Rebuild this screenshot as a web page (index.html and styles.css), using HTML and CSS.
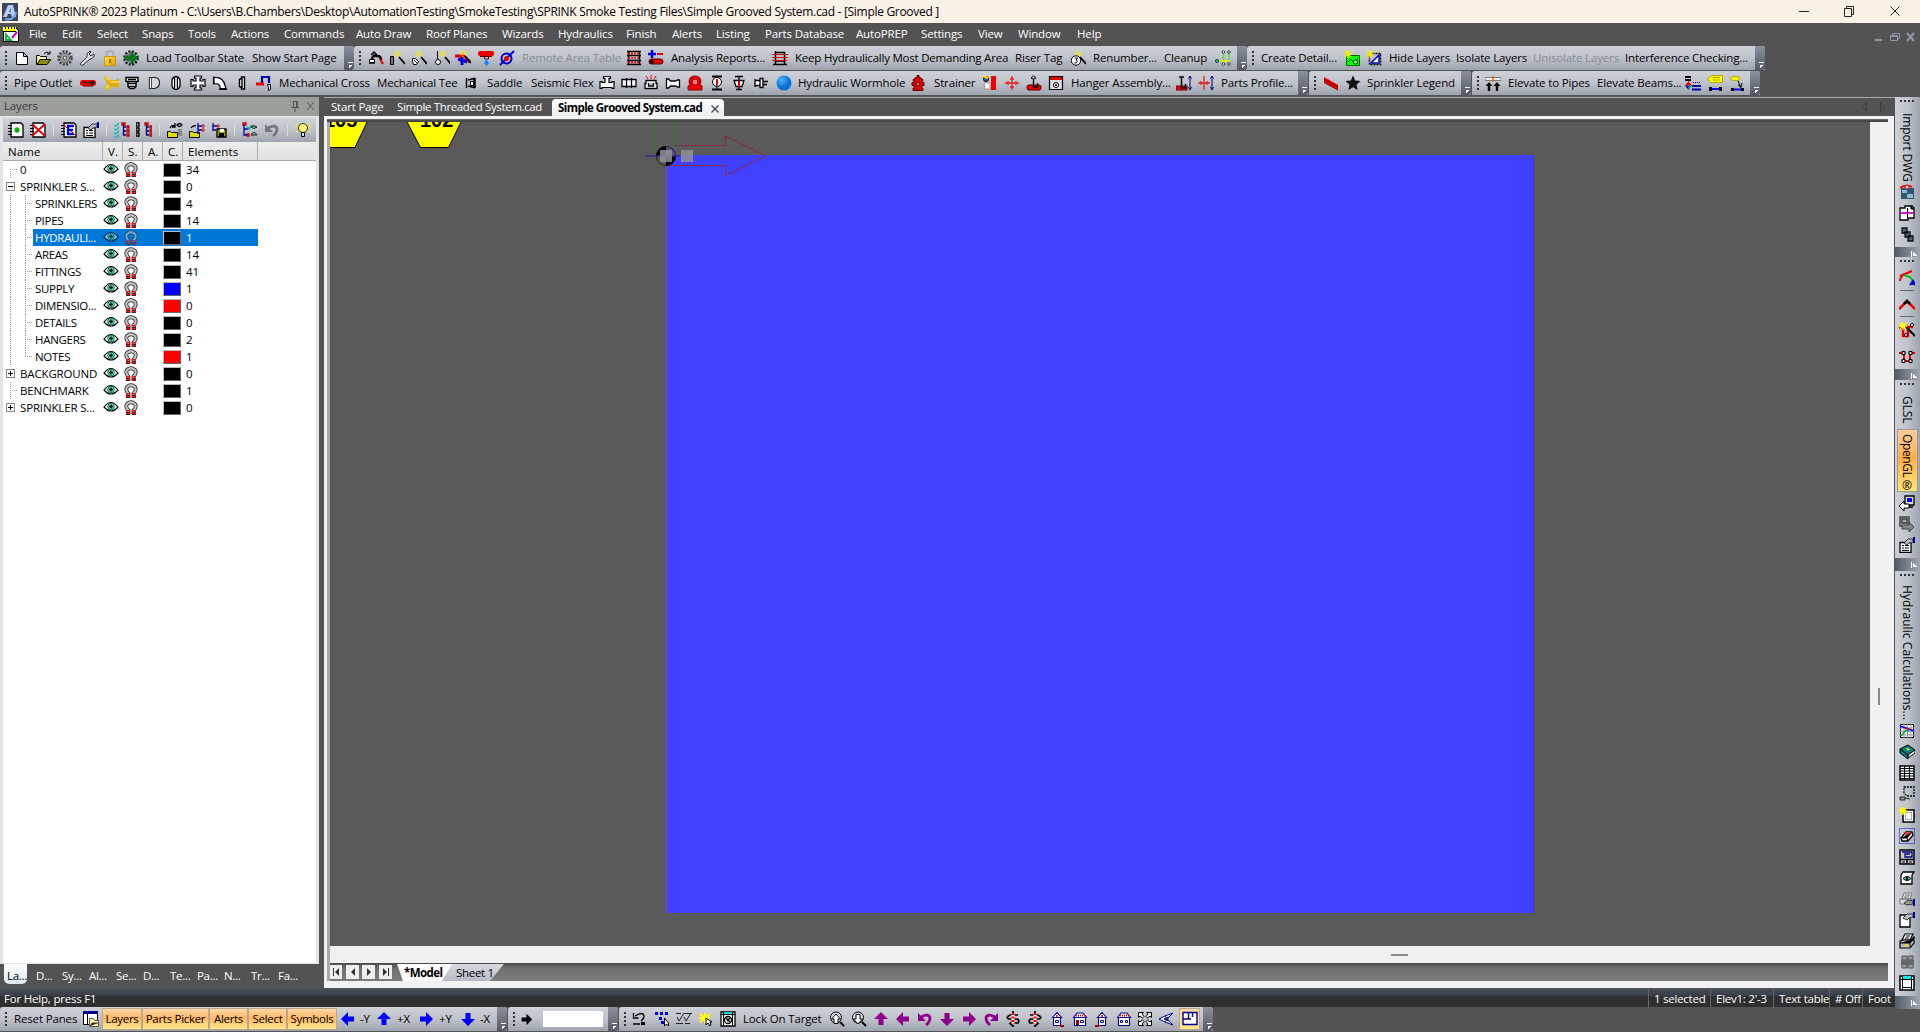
FILE: index.html
```html
<!DOCTYPE html>
<html lang="en">
<head>
<meta charset="utf-8">
<title>AutoSPRINK 2023 Platinum</title>
<link rel="stylesheet" href="styles.css">
</head>
<body>
<svg class="defs" aria-hidden="true">
<defs>
<linearGradient id="gold" x1="0" y1="0" x2="1" y2="1"><stop offset="0" stop-color="#ffe25a"/><stop offset="1" stop-color="#e09a00"/></linearGradient>
<radialGradient id="ball" cx=".35" cy=".3"><stop offset="0" stop-color="#4db4ff"/><stop offset="1" stop-color="#0a6fd6"/></radialGradient>
</defs>
<symbol id="i-app" viewBox="0 0 16 18"><path fill="#3a4560" d="M0 0h16v18H0z"/><path fill="#b8cbed" d="M1 14 6 2h5l3 12h-4l-1-3H6l-1 3z"/><path fill="#3566bb" d="M7 9h2V5z"/><path d="M3 16q9 2 11-7" fill="none" stroke="#79a5ed" stroke-width="2"/></symbol>
<symbol id="i-cad" viewBox="0 0 16 16"><path fill="#fff" stroke="#000" d="M.5 1.500h12l3 3v11H.5z"/><path fill="#ff0" d="M0 1h13v4H0z"/><path stroke="#000" d="M2.500 1v2M5.500 1v2M8.500 1v2M11.500 1v2M0 5.500h13"/><path fill="#0b3" d="m2 6 8 9H2z"/><path fill="#fff" d="m4 11 2 2H4z"/><path stroke="#c0c" stroke-width="2" d="m9 12 5-6"/></symbol>
<symbol id="i-doc" viewBox="0 0 16 16"><path fill="#fff" stroke="#000" d="M2.500 2.500h7l4 4v8h-11zM9.500 2.500v4h4"/></symbol>
<symbol id="i-open" viewBox="0 0 16 16"><path fill="#ffff90" stroke="#000" d="M1.500 14.500v-9h3l1 1h6v3"/><path fill="#908b00" stroke="#000" d="m2 14.500 3-5h11l-4 5z"/><path fill="none" stroke="#000" d="M9 3.500q3-3 5.500 0M15 1v3h-3"/></symbol>
<symbol id="i-gear" viewBox="0 0 16 16"><circle cx="8" cy="8" r="6.500" fill="none" stroke="#444" stroke-width="2.600" stroke-dasharray="2.100 1.300"/><circle cx="8" cy="8" r="4.500" fill="#aaa" stroke="#555"/><circle cx="8" cy="8" r="2" fill="#d5d5d5" stroke="#444"/></symbol>
<symbol id="i-wrench" viewBox="0 0 16 16"><path fill="#ddd" stroke="#333" d="m1 14 7-7q-1-4 3-6l1 1-2 2 2 2 3-2q1 4-4 5l-7 6q-2 1-3-1z"/></symbol>
<symbol id="i-lock" viewBox="0 0 16 16"><path fill="none" stroke="#aaa" stroke-width="2" d="M4.500 8V4q0-3 3.500-3t3.500 3v4"/><path fill="url(#gold)" stroke="#c90" d="M2.500 6.500h11v9h-11z"/><path stroke="#b36b00" stroke-width="2" d="M8 9v4"/></symbol>
<symbol id="i-ggear" viewBox="0 0 16 16"><circle cx="8" cy="8" r="6.500" fill="none" stroke="#222" stroke-width="2.600" stroke-dasharray="2.100 1.300"/><circle cx="8" cy="8" r="5" fill="#777"/><path fill="#0a7a1a" stroke="#063" stroke-width=".6" d="M2 6h6V2l7 6-7 6v-4H2z"/></symbol>
<symbol id="i-dome" viewBox="0 0 16 16"><path d="M4 9q1-4 5-3 4 0 4 4" fill="none" stroke="#000" stroke-width="2.500"/><path d="m3 5 3-3 3 3M1 13h6M5 5l7 1" stroke="#000" stroke-width="1.500" fill="none"/><path stroke="#d00" stroke-width="2" d="m12 9 3 5"/><path fill="#fff" stroke="#000" d="M1.500 9.500h5v3h-5z"/></symbol>
<symbol id="spark" viewBox="0 0 16 16"><path stroke="#ff0" stroke-dasharray="1.500 .7" d="M8 0v8M4 4h8M5.500 1.500l5 5M10.500 1.500l-5 5"/><path stroke="#f40" d="M7.500 4h1"/><path stroke="#000" stroke-width="1.800" d="m10 7 6 7"/></symbol>
<symbol id="i-w1" viewBox="0 0 16 16"><use href="#spark"/><path fill="#777" stroke="#000" d="M1.500 6.500h3v8h-3z"/></symbol>
<symbol id="i-w2" viewBox="0 0 16 16"><use href="#spark"/><path fill="#fff" stroke="#000" d="M1.500 8.500h3l3 3-2 3h-3l-1-3z"/><path stroke="#007" d="m3 10 3 3"/></symbol>
<symbol id="i-w3" viewBox="0 0 16 16"><use href="#spark" x="1"/><path fill="none" stroke="#000" d="M3.500 1v8"/><circle cx="4" cy="12" r="2.500" fill="#fff" stroke="#000"/></symbol>
<symbol id="i-w4" viewBox="0 0 16 16"><path stroke="#d00" stroke-width="3" d="M0 6h10M10 8l5 4"/><path stroke="#00d" stroke-width="3" d="M7 7v8M3 9l9 3"/><use href="#spark" y="-1"/></symbol>
<symbol id="i-drip" viewBox="0 0 16 16"><rect x="0" y="1" width="16" height="5" rx="2" fill="#e80000"/><path fill="none" stroke="#600" d="M2 6.500h12M6.500 6v3h4V6"/><path fill="#18f" d="m8.500 9 2.500 4-2.500 3L6 13z"/></symbol>
<symbol id="i-orbit" viewBox="0 0 16 16"><circle cx="7.500" cy="8.500" r="5" fill="none" stroke="#00c" stroke-width="2"/><path stroke="#00c" stroke-width="2" d="M1 15 15 1"/><circle cx="7.500" cy="8.500" r="2.500" fill="#e00"/></symbol>
<symbol id="i-table" viewBox="0 0 16 16"><path fill="none" stroke="#000" stroke-width="1.500" d="M1 1.500h14M1 5.500h14M1 10.500h14M1 14.500h14M2.500 1v14M13.500 1v14"/><path stroke="#e00" stroke-dasharray="2 1" stroke-width="1.500" d="M2 3.500h12M2 8h12M2 12.500h12"/></symbol>
<symbol id="i-calc" viewBox="0 0 16 16"><path stroke="#00d" stroke-width="2.500" d="M4 0v8M0 4h8"/><path stroke="#e00" stroke-width="2" d="M9 4h6"/><rect x="1" y="9" width="14" height="5" rx="2.500" fill="#e00" stroke="#400"/><circle cx="4" cy="12" r="2" fill="#000"/></symbol>
<symbol id="i-grid" viewBox="0 0 16 16"><path stroke="#000" stroke-width="1.500" fill="none" d="M3.500 1v14M12.500 2v12M3 2.500h10M1 14.500h14M3 11h10"/><path stroke="#d00" d="M0 4.500h16M0 7.500h16M0 10.500h15"/></symbol>
<symbol id="i-ren" viewBox="0 0 16 16"><use href="#spark"/><circle cx="6" cy="10.500" r="4.700" fill="#fff" stroke="#000"/><path fill="none" stroke="#000" d="M4.500 8h3L6 10q3 1 0 3H4.500"/></symbol>
<symbol id="i-clean" viewBox="0 0 16 16"><path stroke="#5d4" stroke-width="1.500" d="M8.500 2v12M14 2v12"/><path stroke="#ee0" stroke-width="1.500" d="M3 11h12"/><g fill="#fff" stroke="#333"><circle cx="8.500" cy="2" r="1.300"/><circle cx="14" cy="2" r="1.300"/><circle cx="8.500" cy="14" r="1.300"/><circle cx="14" cy="14" r="1.300"/></g><circle cx="2" cy="11" r="1.600" fill="#0cc" stroke="#333"/></symbol>
<symbol id="i-newg" viewBox="0 0 16 16"><path fill="#0f0" stroke="#060" d="M2.500 5.500h13v10h-13z"/><path fill="none" stroke="#050" d="m4 12 3-3 3 4 4-5"/><circle cx="11.500" cy="12" r="2" fill="#9f9" stroke="#040"/><path stroke="#ee0" stroke-width="1.200" d="M4 0v8M0 4h8M1 1l6 6M7 1 1 7"/></symbol>
<symbol id="i-newb" viewBox="0 0 16 16"><path fill="#bbd" stroke="#000" stroke-width="1.500" stroke-dasharray="2 1" d="M3.500 3.500h11v11h-11z"/><path fill="#fff" stroke="#00a" stroke-width="1.500" d="m5 13 8-8v8z"/><path stroke="#ee0" stroke-width="1.200" d="M4 0v8M0 4h8M1 1l6 6M7 1 1 7"/></symbol>
<symbol id="i-pipe" viewBox="0 0 16 16"><rect x="0" y="5" width="16" height="6" rx="3" fill="#e80000"/><path stroke="#700" d="M3 11h10"/><path stroke="#222" d="M3 7.500h9"/><ellipse cx="12.500" cy="8" rx="2.200" ry="2" fill="#222"/></symbol>
<symbol id="i-tee" viewBox="0 0 16 16"><path fill="#dcae10" d="m1 2 3-1 3 4h6l1-1h2v9h-2l-1-1H8l-2 3-5-1 3-5z"/><path fill="#f7d440" d="M7 6h9v2H7zM2 2l2-1 3 4-2 1zM2 13l3-4 2 2-2 3z"/></symbol>
<symbol id="i-cup" viewBox="0 0 16 16"><path fill="#fff" stroke="#000" stroke-width="1.500" d="M2 2.500h12v4H2zM4 6.500h8v5l-2 2H6l-2-2z"/><path stroke="#000" stroke-width="1.500" d="M4 8.500h8M5 11.500h6M4 4.500h8"/></symbol>
<symbol id="i-cap" viewBox="0 0 16 16"><path fill="#d8dade" stroke="#222" stroke-width="1.200" d="M3.500 2.500h5q5 0 5 5t-5 6h-5z"/><path fill="#fff" stroke="#222" stroke-width=".8" d="M3.500 2.500h2v11h-2z"/></symbol>
<symbol id="i-ring" viewBox="0 0 16 16"><path fill="#fff" stroke="#000" stroke-width="1.300" d="M8 1.500q-4 1-4 4v5q0 3 4 4 4-1 4-4v-5q0-3-4-4z"/><path fill="#bbb" stroke="#000" stroke-width="1.200" d="M6.600 3v10M9.400 3v10"/></symbol>
<symbol id="i-cross" viewBox="0 0 16 16"><path fill="#fff" stroke="#000" stroke-width="1.200" d="M4.500 1h7v2H10v3h3V4.500h2v7h-2V10h-3v3h1.500v2h-7v-2H6v-3H3v1.500H1v-7h2V6h3V3H4.500z"/></symbol>
<symbol id="i-elbow" viewBox="0 0 16 16"><path fill="#fff" stroke="#000" stroke-width="1.200" d="M2 2.500q9-1 11 8l1 3H8q1-5-6-5zM1.500 1.500v8M7 14.500h8"/></symbol>
<symbol id="i-bar" viewBox="0 0 16 16"><path fill="#fff" stroke="#000" stroke-width="1.400" d="M5.500 4.500l2-1V2h3v12h-3v-1.500l-2-1zM8 3v10"/></symbol>
<symbol id="i-magnetb" viewBox="0 0 16 16"><path fill="none" stroke="#00a" stroke-width="2.200" d="M6 8V2h7v6"/><path stroke="#e00" stroke-width="3" d="M0 9h8"/><path fill="#fff" stroke="#000" d="M11.500 9.500h3v5l-2 1v-3z"/></symbol>
<symbol id="i-sad" viewBox="0 0 16 16"><path fill="none" stroke="#000" stroke-width="1.500" d="M3.500 3v10M5 5l6-1.500v9L5 11M12 3v10"/><path fill="#fff" stroke="#000" d="M7.500 6.500h3v4h-3z"/></symbol>
<symbol id="i-t2" viewBox="0 0 16 16"><path fill="#fff" stroke="#000" stroke-width="1.200" d="M4.500 1.500h7v2H10v4h3v-1h2v7h-2v-1H3v1H1v-7h2v1h3v-4H4.500z"/></symbol>
<symbol id="i-coup" viewBox="0 0 16 16"><path fill="#fff" stroke="#000" stroke-width="1.300" d="M1 4.500h14v7H1zM5.500 3v10M10.500 3v10"/></symbol>
<symbol id="i-noz" viewBox="0 0 16 16"><path stroke="#e00" d="m3 1 2 3M8 0v4M13 1l-2 3"/><path fill="#fff" stroke="#000" stroke-width="1.300" d="M3 5.500h10v3h1v5H2v-5h1zM5.500 8v3h5V8"/></symbol>
<symbol id="i-flg" viewBox="0 0 16 16"><path fill="#fff" stroke="#000" stroke-width="1.300" d="M1.500 4v9h2l2-2h5l2 1h2V5h-2l-2 1h-5l-2-2z"/></symbol>
<symbol id="i-pump" viewBox="0 0 16 16"><path fill="#e80000" stroke="#900" d="M2 7q0-6 6-6t6 6l-1 3 2 1v4H1v-4l2-1z"/><circle cx="8" cy="7" r="3" fill="#f77" stroke="#900"/></symbol>
<symbol id="i-v1" viewBox="0 0 16 16"><path stroke="#000" stroke-width="2" d="M3 1.500h10M3 14.500h10"/><circle cx="8" cy="7" r="4.500" fill="#fff" stroke="#000"/><path stroke="#e00" stroke-width="2" d="M8 4v6"/><path stroke="#000" d="M8 10v5"/></symbol>
<symbol id="i-v2" viewBox="0 0 16 16"><path fill="#fff" stroke="#000" stroke-width="1.300" d="M4 1.500h8M8 2v3M3 5.500h10l-2 6H5zM5 14.500h6M8 11v3"/><path stroke="#e00" stroke-width="2" d="M8 6v6"/></symbol>
<symbol id="i-v3" viewBox="0 0 16 16"><path fill="#fff" stroke="#000" stroke-width="1.300" d="M2 5.500h5v5H2zM7 3.500h3v9H7zM10 6.500h5M10 9.500h4M2 4v8"/></symbol>
<symbol id="i-ball" viewBox="0 0 16 16"><circle cx="8" cy="8" r="7.500" fill="url(#ball)"/></symbol>
<symbol id="i-hyd" viewBox="0 0 16 16"><path fill="#d00" stroke="#500" d="M7 .5h2v2q3 0 3 2h1v1h-1v2h2v3h-2v3h1v2H3v-2h1v-3H2v-3h2v-2H3v-1h1q0-2 3-2z"/><circle cx="8" cy="9" r="1.500" fill="#fbb" stroke="#500"/></symbol>
<symbol id="i-wall" viewBox="0 0 16 16"><path fill="#e00" d="M9 1h5v14H9z"/><circle cx="4" cy="4" r="2.500" fill="#36a" stroke="#000"/><path stroke="#fd0" stroke-width="2" d="m1 1 5 2"/><path fill="#fff" stroke="#999" d="M2 8h6v6H3z"/></symbol>
<symbol id="i-x1" viewBox="0 0 16 16"><path stroke="#e02020" stroke-width="1.300" fill="none" d="M8 1v14M1 8h14M4 6v4M12 6v4M6 4h4M6 12h4"/></symbol>
<symbol id="i-hang" viewBox="0 0 16 16"><rect x="1" y="10" width="14" height="5" rx="2" fill="#e00" stroke="#500"/><path fill="none" stroke="#000" stroke-width="1.300" d="M7.500 4v8h4V8M5 3h5"/><circle cx="7.500" cy="2.500" r="1.500" fill="#fff" stroke="#000"/></symbol>
<symbol id="i-box" viewBox="0 0 16 16"><path fill="#ddd" stroke="#000" stroke-width="1.200" d="M1.500 1.500h13v13h-13z"/><path fill="#d00" d="M2 2h12v3H2z"/><circle cx="8" cy="10" r="2.500" fill="#fff" stroke="#000"/><circle cx="8" cy="10" r="1" fill="#000"/></symbol>
<symbol id="i-hb" viewBox="0 0 16 16"><rect x="0" y="11" width="11" height="4" fill="#e00" stroke="#700"/><path stroke="#000" stroke-width="1.500" fill="none" d="M5.500 2v11h4V9M3 2h5"/><path stroke="#008" fill="none" d="M14 2v12M12.500 3.500 14 1l1.500 2.500M12.500 12l1.500 3 1.500-3"/></symbol>
<symbol id="i-xb" viewBox="0 0 16 16"><path stroke="#e02020" stroke-width="1.300" fill="none" d="M6 1v14M0 8h12M3 6v4M9 6v4"/><path stroke="#008" fill="none" d="M14 2v12M12.500 3.500 14 1l1.500 2.500M12.500 12l1.500 3 1.500-3"/></symbol>
<symbol id="i-beam" viewBox="0 0 16 16"><path fill="#e00" d="m1 2 14 8v5L1 7z"/><path stroke="#700" d="M1 4.500 15 12M1 7.500 15 15"/></symbol>
<symbol id="i-star" viewBox="0 0 16 16"><path fill="#111" d="m8 .5 2.200 5 5.300.6-4 3.600 1.200 5.300L8 12.200 3.300 15l1.200-5.300-4-3.600 5.300-.6z"/></symbol>
<symbol id="i-elev" viewBox="0 0 16 16"><path fill="#eee" stroke="#777" d="M0 2.500h16v3H0z"/><path stroke="#e60" stroke-width="1.500" d="M8 1v6"/><path fill="#000" d="m4 7 3.500 4H5.200v5H2.800v-5H.5zM12 7l3.500 4h-2.300v5h-2.400v-5H8.500z"/></symbol>
<symbol id="i-leg" viewBox="0 0 16 16"><path stroke="#000" stroke-width="2" d="M0 2h6M0 5h6"/><path fill="#e00" d="m3.500 6 3.500 4.500H0z"/><path fill="#0a3" d="M3.500 15 7 10.500H3.500z"/><path fill="#00e" d="M3.500 15 0 10.500h3.500z"/><path stroke="#00a" d="M8 7.500h8" stroke-dasharray="1 1"/><path stroke="#00a" stroke-width="2" d="M7 11h9M7 14.500h9"/></symbol>
<symbol id="i-tag" viewBox="0 0 16 16"><path fill="#ff0" stroke="#aa0" d="M5 .5h10.500v7H4L.5 4z"/><path stroke="#a90" d="M6 2.500h7M6 5h7"/><path stroke="#00f" stroke-width="2" d="M4 14h8"/><path fill="#000" d="M2 12h3v4H2zM12 12h3v4h-3z"/></symbol>
<symbol id="i-tag2" viewBox="0 0 16 16"><path fill="#ff0" stroke="#aa0" d="M4 1.500h6v4H4L1 3z"/><path stroke="#000" d="m9 6 3 7M9 10l3 2 1-4" fill="none"/><path stroke="#00f" stroke-width="2" d="M4 14.500h8"/><path fill="#000" d="M2 13h3v3H2zM12 13h3v3h-3z"/></symbol>
<symbol id="i-panes" viewBox="0 0 16 16"><path fill="#fff" stroke="#000" d="M.5.5h14v13H.5z"/><path fill="#008" d="M0 0h15v3H0z"/><path stroke="#000" d="M4.500 3v10"/><path fill="#ffef9c" stroke="#555" d="M6.500 15.500v-8h4l1 2h4v6z"/><path stroke="#555" d="m7 15 2-3h6"/></symbol>
<symbol id="i-left" viewBox="0 0 16 16"><path d="m1 8 7-7v4.500h6v5H8V15z"/></symbol>
<symbol id="i-undo" viewBox="0 0 16 16"><path fill="none" stroke="currentColor" stroke-width="2.800" d="M4 6q8-4 9 1 0 4-4 7"/><path d="M1 2v8h8z"/></symbol>
<symbol id="i-u1" viewBox="0 0 16 16"><path fill="none" stroke="#000" stroke-width="1.300" d="M4 5q8-5 9 0 0 3-3 5M2.500 2v5h5M2 13h7"/><path d="M10 11h4v3h-4z"/></symbol>
<symbol id="i-sel" viewBox="0 0 16 16"><path fill="#00e" d="M1 1h3v3H1zM6 1h3v3H6zM11 1h3v3h-3zM5 6h3v3H5zM7 10h3v3H7z"/><path fill="#fff" stroke="#000" d="M10.500 7v8l2-2 2 2v-3z"/></symbol>
<symbol id="i-chk" viewBox="0 0 16 16"><path fill="none" stroke="#222" d="M0 2.500h5M8 2.500h8M1 6l2 4 5-8M8 6l2 4 5-8M0 12.500h7M9 12.500h5"/></symbol>
<symbol id="i-burst" viewBox="0 0 16 16"><path stroke="#ff0" stroke-width="2" d="M2 3l10 8M2 11 12 3M7 2v10M1 7h11"/><path fill="#fff" stroke="#000" d="M8 7v7l2-2 2 3 1-1-1-3h2z"/></symbol>
<symbol id="i-target" viewBox="0 0 16 16"><path fill="#fff" stroke="#000" stroke-width="1.300" d="M1 1h14v14H1z"/><path fill="#0dd" d="M4 1h8v2H4z"/><path stroke="#000" d="M3.500 1v14M12.500 1v14M1 3.500h14"/><circle cx="8" cy="9" r="3.500" fill="#fff" stroke="#000" stroke-width="1.300"/><path stroke="#000" stroke-width="1.500" d="m6 7 4 4M7 10l3-3"/></symbol>
<symbol id="i-zup" viewBox="0 0 16 16"><circle cx="7" cy="6.500" r="5.500" fill="#ddd" stroke="#000"/><path stroke="#000" stroke-width="2" d="m11 11 4 4"/><path fill="#fff" stroke="#000" d="M7 3 11.500 8H9v4.500H5V8H2.500z"/></symbol>
<symbol id="i-zdn" viewBox="0 0 16 16"><circle cx="7" cy="6.500" r="5.500" fill="#ddd" stroke="#000"/><path stroke="#000" stroke-width="2" d="m11 11 4 4"/><path fill="#fff" stroke="#000" d="M7 13 2.500 8H5V3.500h4V8h2.500z"/></symbol>
<symbol id="i-rot" viewBox="0 0 16 16"><path fill="none" stroke="#000" stroke-width="1.700" d="M13 4H5Q0 7 4 8h8q3 1 1 4H6M8 10l-3 2.500L8 15M8 0v2M8 14v2"/><path stroke="#fff" stroke-width="3" d="M8 2v11"/><path stroke="#e00" stroke-width="3" stroke-dasharray="2 1.500" d="M8 2v11"/></symbol>
<symbol id="i-h1" viewBox="0 0 16 16"><path fill="#fff" stroke="#008" stroke-width="1.100" d="M4.500 6.500h7v8h-7zM3.500 6.500 8 1.500l4.500 5z"/><path fill="#e33" d="M7 4h2v2H7z"/><path fill="none" stroke="#008" d="M6.500 9.500h3v2h-3z"/><path stroke="#900" stroke-width="2" d="M11 15h4"/></symbol>
<symbol id="i-h2" viewBox="0 0 16 16"><path fill="#fff" stroke="#008" stroke-width="1.100" d="M2.500 6.500h11v8h-11zM1.500 6.500 5 2h6l3.500 4.500z"/><path stroke="#e00" stroke-width="2" stroke-dasharray="1 1" d="M4 4.500h9"/><path fill="#900" d="M4 9h3v5H4z"/><path fill="none" stroke="#008" d="M8.500 9.500h3v2h-3z"/></symbol>
<symbol id="i-h3" viewBox="0 0 16 16"><path fill="#fff" stroke="#008" stroke-width="1.100" d="M2.500 6.500h11v8h-11zM1.500 6.500 5 2h6l3.500 4.500z"/><path stroke="#e00" stroke-width="2" stroke-dasharray="1 1" d="M4 4.500h9"/><path fill="none" stroke="#008" d="M4.500 9.500h2v2h-2zM9.500 9.500h2v2h-2z"/></symbol>
<symbol id="i-ext" viewBox="0 0 16 16"><path fill="#fff" stroke="#000" d="M1.500 1.500h5L5 3l2 2.500L5.500 7 3 5 1.500 6.500zM14.500 1.500v5L13 5l-2.500 2L9 5.500 11 3 9.500 1.500zM1.500 14.500v-5L3 11l2.500-2L7 10.500 5 13l1.500 1.500zM14.500 14.500h-5L11 13l-2-2.500L10.500 9l2.500 2 1.500-1.500z"/></symbol>
<symbol id="i-iso" viewBox="0 0 16 16"><path fill="#fff" stroke="#007" d="m15 2-8 3-6 3 6 3 8 3-4-4-5-2 5-2zM7 5l4 5M7 11l4-5"/></symbol>
<symbol id="i-plan" viewBox="0 0 16 16"><path fill="#fff" stroke="#008" stroke-width="1.400" d="M1 1.500h14v12H1zM6.500 2v6M10.500 2v4M9 8H1"/></symbol>
<symbol id="i-nlay" viewBox="0 0 16 16"><path fill="#fff" stroke="#000" stroke-width="1.300" d="M3 1h10l2 2v12H3z"/><path stroke="#000" d="M0 3.500h4M0 6.500h4M0 9.500h4M0 12.500h4"/><path stroke="#0a0" stroke-width="1.200" d="M9 5v6M6 8h6M7 6l4 4M11 6l-4 4"/></symbol>
<symbol id="i-dlay" viewBox="0 0 16 16"><path fill="#fff" stroke="#000" stroke-width="1.300" d="M3 1h10l2 2v12H3z"/><path stroke="#000" d="M0 3.500h4M0 6.500h4M0 9.500h4M0 12.500h4"/><path stroke="#d00" stroke-width="1.800" d="m2 2 13 12M15 2 2 14"/></symbol>
<symbol id="i-elay" viewBox="0 0 16 16"><path fill="#fff" stroke="#000" stroke-width="1.300" d="M3 1h10l2 2v12H3z"/><path stroke="#000" d="M0 3.500h4M0 6.500h4M0 9.500h4M0 12.500h4"/><path fill="none" stroke="#00d" stroke-width="2.300" d="M13 4H7v8h6M7 8h5"/><path stroke="#d00" d="m2 2 5 5M10 9l5 5"/></symbol>
<symbol id="i-prop" viewBox="0 0 16 16"><path fill="#fff" stroke="#000" stroke-width="1.300" d="M1 5.500h11v10H1z"/><path stroke="#000" d="M3 8.500h2M6 8.500h4M3 11h2M6 11h4M3 13.500h7"/><path fill="#bbb" stroke="#333" d="m5 6 4-4 5 0v3l-4 1-2 2z"/><path stroke="#00a" stroke-width="2" d="M15 0v6"/></symbol>
<symbol id="i-tree" viewBox="0 0 16 16"><path fill="none" stroke="#008" stroke-width="1.300" d="M9.500 2v11M9 5h3M9 9h3M9 13h3"/><path fill="none" stroke="#b00" stroke-width="1.300" d="M8 1h3v2H8zM13 4h2v2h-2zM13 8h2v2h-2zM13 12h2v2h-2z"/></symbol>
<symbol id="i-tree1" viewBox="0 0 16 16"><use href="#i-tree"/><path stroke="#0bb" fill="none" stroke-width="1.300" d="m0 3 2 1 3-3M0 7l2 1 3-3M0 11l2 1 3-3M0 15l2 1 3-3"/></symbol>
<symbol id="i-tree2" viewBox="0 0 16 16"><use href="#i-tree" x="1"/><path fill="none" stroke="#000" stroke-width="1.300" d="M0 1h3v3H0zM0 6h3v3H0zM0 11h3v3H0z"/></symbol>
<symbol id="i-fold" viewBox="0 0 16 16"><path fill="#dd0" stroke="#000" d="M.5 15.500v-6h3l1 1h6v5z"/><path fill="none" stroke="#000" stroke-width="1.300" d="M3 6q2-4 5-2M8 1v4H5M10 3q3-3 5 0-2 3-5 0z"/><path fill="#888" d="M11 7h4v7h-4z"/></symbol>
<symbol id="i-fold2" viewBox="0 0 16 16"><path fill="#dd0" stroke="#000" d="M.5 15.500v-6h3l1 1h6v5z"/><path fill="none" stroke="#000" stroke-width="1.300" d="M2 6q2-3 5-2"/><path fill="none" stroke="#00a" stroke-width="1.300" d="M9 1v11M9 4h5M9 8h5"/><path fill="#fff" stroke="#b00" d="M13 3h2v2h-2zM13 7h2v2h-2z"/></symbol>
<symbol id="i-save" viewBox="0 0 16 16"><path fill="#990" stroke="#000" stroke-width="1.300" d="M6 7h9v8H6z"/><path fill="#000" d="M8 11h5v4H8z"/><path fill="#fff" d="M9 7h4v3H9z"/><path fill="none" stroke="#00a" stroke-width="1.300" d="M2 1v8M2 4h5M2 8h3"/><path fill="#fff" stroke="#b00" d="M6 3h2v2H6z"/></symbol>
<symbol id="i-vis" viewBox="0 0 16 16"><path fill="none" stroke="#b00" stroke-width="1.300" d="M1 1h3v2H1zM5 12h2v2H5z"/><path fill="none" stroke="#00a" stroke-width="1.300" d="M2 3v10h3M2 7h4"/><path stroke="#0aa" fill="none" stroke-width="1.500" d="m5 5 2 2 3-4"/><path fill="#6c9" stroke="#222" d="M9 5q3-3 6 0-3 3-6 0zM9 13q3-5 6 0z"/></symbol>
<symbol id="i-bulb" viewBox="0 0 16 16"><circle cx="8" cy="6" r="4.500" fill="#ff6" stroke="#333"/><path fill="#ddd" stroke="#000" d="M6.500 10.500h3v4h-3z"/><path stroke="#ff0" d="M0 5h2M14 5h2M1 1l2 1M15 1l-2 1M1 10l2-1M15 10l-2-1"/></symbol>
<symbol id="i-eye" viewBox="0 0 16 12"><path fill="#fff" stroke="#000" stroke-width="1.200" d="M1 6q7-9 14 0-7 8-14 0z"/><circle cx="8" cy="5.500" r="3.300" fill="#5fe0c0" stroke="#174"/><path stroke="#000" stroke-width="1.300" d="M8 3.500v4M6 5.500h4"/></symbol>
<symbol id="i-mag" viewBox="0 0 14 15"><path fill="none" stroke="#222" stroke-width="3.800" d="M2 13.500h2.500V10.500Q1 7 3 4q4-3.500 8 0 2 3-1.500 6.500v3H12"/><path fill="none" stroke="#c4c4c4" stroke-width="2.200" d="M4.500 12v-1.500Q1 7 3 4q4-3.500 8 0 2 3-1.500 6.500V12"/><path stroke="#e11" stroke-width="1.400" d="M2 10.700h4M2 13.500h4M8 10.700h4M8 13.500h4"/></symbol>
<symbol id="s-dwg" viewBox="0 0 16 16"><path fill="#357" d="M2 4h13v11H2z"/><path fill="#8bc" d="M3 6h5v3H3zM8 10h6v4H8z"/><path stroke="#e00" stroke-width="1.800" fill="none" d="M1 4q6-4 12-1"/><circle cx="8" cy="3" r="2" fill="#fff" stroke="#c00"/></symbol>
<symbol id="s-docs" viewBox="0 0 16 16"><path fill="#fff" stroke="#000" stroke-width="1.300" d="M1 3h5V1h7l2 2v10H9v2H1z"/><path stroke="#000" d="M8.500 3v10M12 1v3h3"/><path stroke="#c0c" stroke-width="1.800" d="M2 8h12"/></symbol>
<symbol id="s-blk" viewBox="0 0 16 16"><path fill="#468" stroke="#111" stroke-width="1.300" d="M3 2h5v5H3zM6 6h5v5H6zM9 10h5v5H9z"/></symbol>
<symbol id="s-ra" viewBox="0 0 16 16"><path stroke="#e00" stroke-width="2" d="M1 6 13 1M5 4q-4 3-4 7" fill="none"/><path fill="none" stroke="#0b2" stroke-width="2" d="m5 5 6 2 3 4"/><path stroke="#00d" stroke-width="2" d="m11 15 3-4 2 4M14 11v4"/></symbol>
<symbol id="s-up" viewBox="0 0 16 16"><path stroke="#e00" stroke-width="2.500" fill="none" d="m0 13 8-8 8 8"/><path stroke="#000" stroke-width="2.500" fill="none" d="m5 8 3-3 3 3"/></symbol>
<symbol id="s-wz" viewBox="0 0 16 16"><path stroke="#e00" stroke-width="2.500" fill="none" d="M0 6h4v8h5V5h5"/><path stroke="#000" stroke-width="2" d="m6 4 10 10"/><g fill="#fff" stroke="#000"><circle cx="13" cy="3" r="1.500"/><circle cx="7" cy="13" r="1.500"/></g><path stroke="#ff0" stroke-width="1.300" d="M4 0v8M0 4h8M1 1l6 6M7 1 1 7"/></symbol>
<symbol id="s-nd" viewBox="0 0 16 16"><path stroke="#e00" stroke-width="2" fill="none" d="M0 4h5v8h6V4h5"/><g fill="#fff" stroke="#000" stroke-width="1.200"><circle cx="4.500" cy="4" r="1.700"/><circle cx="11.500" cy="4" r="1.700"/><circle cx="4.500" cy="12" r="1.700"/><circle cx="11.500" cy="12" r="1.700"/></g></symbol>
<symbol id="s-m1" viewBox="0 0 16 16"><path fill="#ddd" stroke="#000" stroke-width="1.300" d="M6 1h9v9H6zM8 12h6"/><path fill="#00e" d="M8 3h5v4H8z"/><path fill="#fff" stroke="#000" d="m0 11 5-5v3h5v4H5v3z"/></symbol>
<symbol id="s-m2" viewBox="0 0 16 16"><path fill="#aaa" stroke="#444" stroke-width="1.500" d="M1 1h9v9H1zM3 3h5v4H3z"/><path fill="#888" stroke="#444" d="m15 11-5-5v3H3v4h7v3z"/></symbol>
<symbol id="s-chart" viewBox="0 0 16 16"><path fill="#fff" stroke="#000" d="M1.500 1.500h13v13h-13z"/><path stroke="#999" d="M5 1v14M8.500 1v14M12 1v14M1 5h14M1 8.500h14M1 12h14"/><path stroke="#00e" stroke-width="1.800" fill="none" d="m1 3 14 5"/><path stroke="#0a3" stroke-width="1.500" fill="none" d="m2 13 5-6 3 1"/><path stroke="#e00" stroke-width="1.500" d="m7 5 3 1"/></symbol>
<symbol id="s-book" viewBox="0 0 16 16"><path fill="#087f80" stroke="#000" d="M1 5 9 1l7 5-7 5z"/><path fill="#fff" stroke="#000" d="m9 11 7-5v3l-7 5z"/><path fill="#087f80" stroke="#000" d="m1 5 8 6v4L1 9z"/><path fill="#fe0" d="m7 4 4 1-2 2z"/></symbol>
<symbol id="s-tbl" viewBox="0 0 16 16"><path fill="#fff" stroke="#000" stroke-width="1.500" d="M1 1h14v14H1z"/><path stroke="#000" d="M1 3.500h14M1 6h14M1 8.500h14M1 11h14M1 13.500h14M5.500 1v14M10.500 1v14"/></symbol>
<symbol id="s-las" viewBox="0 0 16 16"><path fill="none" stroke="#000" stroke-width="1.300" stroke-dasharray="2 1" d="M5 1h10v9H8L5 7z"/><path fill="#999" stroke="#222" d="M1 11h5v3H1zM6 12l5 1"/></symbol>
<symbol id="s-nt" viewBox="0 0 16 16"><path fill="#fff" stroke="#000" stroke-width="1.500" d="M4 3h11v12H4z"/><path fill="none" stroke="#444" stroke-dasharray="1 1" d="M6.500 5.500h6v7h-6z"/><path stroke="#ff0" stroke-width="1.500" d="M4 0v8M0 4h8M1 1l6 6M7 1 1 7"/></symbol>
<symbol id="s-er" viewBox="0 0 16 16"><path fill="none" stroke="#00c" stroke-dasharray="1 1" d="M.5.5h15v15H.5z"/><path fill="#fff" stroke="#000" stroke-width="1.300" d="m2 10 5-6h6l1 3-5 6H3z"/><path fill="#e44" d="m5 7 2-3h6l-3 4z"/><path stroke="#000" d="M2 10h6l5-6M8 10l1 3"/></symbol>
<symbol id="s-pn" viewBox="0 0 16 16"><path fill="#ccc" stroke="#000" stroke-width="1.500" d="M1 1h14v14H1zM1 10.500h14M8 10v5"/><path fill="none" stroke="#008" stroke-width="1.300" d="M3 3h10v5H6V5h5"/><path stroke="#000" d="M3 13h3M10 13h3"/></symbol>
<symbol id="s-scr" viewBox="0 0 16 16"><path fill="#fff" stroke="#000" stroke-width="1.300" d="M4 2h11l-2 3v9H2V5z"/><path fill="#3c9" stroke="#000" d="M4 8.500q4-4 8 0-4 4-8 0z"/><path d="M7 7h2v3H7z"/></symbol>
<symbol id="s-hp" viewBox="0 0 16 16"><path fill="#ddd" stroke="#777" d="m5 2 8 0-2 6H3zM1 8h12l-3 5H1zM6 4h5M5 6h5"/><path fill="#999" stroke="#333" d="m5 12 4-3 5 1v3l-6 1z"/><path stroke="#00a" stroke-width="2" d="M15 8v7"/></symbol>
<symbol id="s-hs" viewBox="0 0 16 16"><path fill="#fff" stroke="#000" stroke-width="1.300" d="M1 3h10v12H1z"/><path fill="#bbb" stroke="#333" d="m4 6 4-4h6v3l-4 1-2 2z"/><path stroke="#00a" stroke-width="2" d="M15 0v6"/></symbol>
<symbol id="s-prt" viewBox="0 0 16 16"><path fill="#fff" stroke="#000" stroke-width="1.200" d="M6 1h8l-3 6H3zM7 3h4M6 5h4"/><path fill="#bbb" stroke="#000" stroke-width="1.200" d="m1 8 3-1h8l3-3v6l-4 5H1z"/><path stroke="#000" d="M1 10h10l4-4M11 10v4"/><path stroke="#ee0" stroke-width="1.500" d="M6 12.500h3"/></symbol>
<symbol id="s-gr" viewBox="0 0 16 16"><path fill="#999" stroke="#555" d="M3 2h5v4H3zM9 2h5v4H9zM3 10h5v4H3zM9 10h5v4H9z"/><path fill="#666" d="M2 6h13v5H2z"/></symbol>
<symbol id="s-win" viewBox="0 0 16 16"><path fill="#fff" stroke="#000" stroke-width="1.500" d="M1 1h14v14H1z"/><path fill="#0ee" d="M4 1h8v3H4z"/><path stroke="#000" d="M3.500 1v14M12.500 1v14M1 4.500h14M3 12.500h10"/></symbol>
</svg>

<div class="app">
  <header class="titlebar">
    <svg class="app-icon"><use href="#i-app"/></svg>
    <span class="title">AutoSPRINK® 2023 Platinum - C:\Users\B.Chambers\Desktop\AutomationTesting\SmokeTesting\SPRINK Smoke Testing Files\Simple Grooved System.cad - [Simple Grooved ]</span>
    <svg class="win-buttons" viewBox="0 0 110 20"><path fill="none" stroke="#222" d="M4 10.500h10M49.500 7.500h7v8h-7zM51.500 7V5.500h7v8H57M95.500 5.500l9 9M104.500 5.500l-9 9"/></svg>
  </header>

  <nav class="menubar">
    <span class="menu-icon"><svg class="ic"><use href="#i-cad"/></svg></span>
    <span>File</span><span>Edit</span><span>Select</span><span>Snaps</span><span>Tools</span><span>Actions</span><span>Commands</span><span>Auto Draw</span><span>Roof Planes</span><span>Wizards</span><span>Hydraulics</span><span>Finish</span><span>Alerts</span><span>Listing</span><span>Parts Database</span><span>AutoPREP</span><span>Settings</span><span>View</span><span>Window</span><span>Help</span>
    <svg class="mdi-buttons" viewBox="0 0 42 12"><path fill="none" stroke="#8f98a8" stroke-width="2" d="M1 9h7M33 2l7 8M40 2l-7 8"/><path fill="none" stroke="#8f98a8" d="M16.500 4.500h7v5h-7zM18.500 4V2.500h7v5H24M16 5.500h8"/></svg>
  </nav>

  <div class="toolrow">
    <div class="toolbar tb-file">
      <i class="grip"></i>
      <svg class="ic"><use href="#i-doc"/></svg><svg class="ic"><use href="#i-open"/></svg><svg class="ic"><use href="#i-gear"/></svg><svg class="ic"><use href="#i-wrench"/></svg><svg class="ic"><use href="#i-lock"/></svg><svg class="ic"><use href="#i-ggear"/></svg>
      <span>Load Toolbar State</span><span>Show Start Page</span><i class="cap"></i>
    </div>
    <div class="toolbar tb-hyd">
      <i class="grip"></i>
      <svg class="ic"><use href="#i-dome"/></svg><svg class="ic"><use href="#i-w1"/></svg><svg class="ic"><use href="#i-w2"/></svg><svg class="ic"><use href="#i-w3"/></svg><svg class="ic"><use href="#i-w4"/></svg><svg class="ic"><use href="#i-drip"/></svg><svg class="ic"><use href="#i-orbit"/></svg>
      <span class="off">Remote Area Table</span><svg class="ic"><use href="#i-table"/></svg><svg class="ic"><use href="#i-calc"/></svg><span>Analysis Reports...</span><svg class="ic"><use href="#i-grid"/></svg><span class="tight">Keep Hydraulically Most Demanding Area</span><span>Riser Tag</span><svg class="ic"><use href="#i-ren"/></svg><span>Renumber...</span><span>Cleanup</span><svg class="ic"><use href="#i-clean"/></svg><i class="cap"></i>
    </div>
    <div class="toolbar tb-layers">
      <i class="grip"></i><span>Create Detail...</span><svg class="ic"><use href="#i-newg"/></svg><svg class="ic"><use href="#i-newb"/></svg><span>Hide Layers</span><span>Isolate Layers</span><span class="off">Unisolate Layers</span><span>Interference Checking...</span><i class="cap"></i>
    </div>
  </div>
  <div class="toolrow toolrow-gap">
    <div class="toolbar tb-fit">
      <i class="grip"></i><span>Pipe Outlet</span>
      <svg class="ic"><use href="#i-pipe"/></svg><svg class="ic"><use href="#i-tee"/></svg><svg class="ic"><use href="#i-cup"/></svg><svg class="ic"><use href="#i-cap"/></svg><svg class="ic"><use href="#i-ring"/></svg><svg class="ic"><use href="#i-cross"/></svg><svg class="ic"><use href="#i-elbow"/></svg><svg class="ic"><use href="#i-bar"/></svg><svg class="ic"><use href="#i-magnetb"/></svg>
      <span>Mechanical Cross</span><span>Mechanical Tee</span><svg class="ic"><use href="#i-sad"/></svg><span>Saddle</span><span>Seismic Flex</span>
      <svg class="ic"><use href="#i-t2"/></svg><svg class="ic"><use href="#i-coup"/></svg><svg class="ic"><use href="#i-noz"/></svg><svg class="ic"><use href="#i-flg"/></svg><svg class="ic"><use href="#i-pump"/></svg><svg class="ic"><use href="#i-v1"/></svg><svg class="ic"><use href="#i-v2"/></svg><svg class="ic"><use href="#i-v3"/></svg><svg class="ic"><use href="#i-ball"/></svg>
      <span>Hydraulic Wormhole</span><svg class="ic"><use href="#i-hyd"/></svg><span>Strainer</span>
      <svg class="ic"><use href="#i-wall"/></svg><svg class="ic"><use href="#i-x1"/></svg><svg class="ic"><use href="#i-hang"/></svg><svg class="ic"><use href="#i-box"/></svg>
      <span>Hanger Assembly...</span><svg class="ic"><use href="#i-hb"/></svg><svg class="ic"><use href="#i-xb"/></svg><span>Parts Profile...</span><i class="cap"></i>
    </div>
    <div class="toolbar tb-legend">
      <i class="grip"></i><svg class="ic"><use href="#i-beam"/></svg><svg class="ic"><use href="#i-star"/></svg><span>Sprinkler Legend</span><i class="cap"></i>
    </div>
    <div class="toolbar tb-elev">
      <i class="grip"></i><svg class="ic"><use href="#i-elev"/></svg><span>Elevate to Pipes</span><span>Elevate Beams...</span><svg class="ic"><use href="#i-leg"/></svg><svg class="ic"><use href="#i-tag"/></svg><svg class="ic"><use href="#i-tag2"/></svg><i class="cap"></i>
    </div>
  </div>

  <div class="middle">
    <div class="main-col">
      <div class="workspace">
        <aside class="panel">
          <div class="panel-title"><span>Layers</span>
            <svg viewBox="0 0 26 12"><path fill="none" stroke="#555" d="M3.500 1v6M2.500 1.500h5M6.500 1v6M7.500 1v6M1 7.500h8M5 8v4M17 2l7 8M24 2l-7 8"/></svg></div>
          <div class="panel-body">
            <div class="panel-tools">
              <svg class="ic"><use href="#i-nlay"/></svg><svg class="ic"><use href="#i-dlay"/></svg><i class="vsep"></i><svg class="ic"><use href="#i-elay"/></svg><svg class="ic"><use href="#i-prop"/></svg><i class="vsep"></i><svg class="ic"><use href="#i-tree1"/></svg><svg class="ic"><use href="#i-tree2"/></svg><i class="vsep"></i><svg class="ic"><use href="#i-fold"/></svg><svg class="ic"><use href="#i-fold2"/></svg><svg class="ic"><use href="#i-save"/></svg><i class="vsep"></i><svg class="ic"><use href="#i-vis"/></svg><svg class="ic gray"><use href="#i-undo"/></svg><i class="vsep"></i><svg class="ic"><use href="#i-bulb"/></svg>
            </div>
            <div class="list-head"><span>Name</span><span>V.</span><span>S.</span><span>A.</span><span>C.</span><span>Elements</span><span></span></div>
            <div class="list">
              <div class="row top"><b class="first"></b><span>0</span><svg class="eye"><use href="#i-eye"/></svg><svg class="mag"><use href="#i-mag"/></svg><i class="sw"></i><em>34</em></div>
              <div class="row top"><b class="box minus"></b><span>SPRINKLER S...</span><svg class="eye"><use href="#i-eye"/></svg><svg class="mag"><use href="#i-mag"/></svg><i class="sw"></i><em>0</em></div>
              <div class="row sub"><b></b><span>SPRINKLERS</span><svg class="eye"><use href="#i-eye"/></svg><svg class="mag"><use href="#i-mag"/></svg><i class="sw"></i><em>4</em></div>
              <div class="row sub"><b></b><span>PIPES</span><svg class="eye"><use href="#i-eye"/></svg><svg class="mag"><use href="#i-mag"/></svg><i class="sw"></i><em>14</em></div>
              <div class="row sub picked"><b></b><span>HYDRAULI...</span><svg class="eye"><use href="#i-eye"/></svg><svg class="mag"><use href="#i-mag"/></svg><i class="sw"></i><em>1</em></div>
              <div class="row sub"><b></b><span>AREAS</span><svg class="eye"><use href="#i-eye"/></svg><svg class="mag"><use href="#i-mag"/></svg><i class="sw"></i><em>14</em></div>
              <div class="row sub"><b></b><span>FITTINGS</span><svg class="eye"><use href="#i-eye"/></svg><svg class="mag"><use href="#i-mag"/></svg><i class="sw"></i><em>41</em></div>
              <div class="row sub"><b></b><span>SUPPLY</span><svg class="eye"><use href="#i-eye"/></svg><svg class="mag"><use href="#i-mag"/></svg><i class="sw blue"></i><em>1</em></div>
              <div class="row sub"><b></b><span>DIMENSIO...</span><svg class="eye"><use href="#i-eye"/></svg><svg class="mag"><use href="#i-mag"/></svg><i class="sw red"></i><em>0</em></div>
              <div class="row sub"><b></b><span>DETAILS</span><svg class="eye"><use href="#i-eye"/></svg><svg class="mag"><use href="#i-mag"/></svg><i class="sw"></i><em>0</em></div>
              <div class="row sub"><b></b><span>HANGERS</span><svg class="eye"><use href="#i-eye"/></svg><svg class="mag"><use href="#i-mag"/></svg><i class="sw"></i><em>2</em></div>
              <div class="row sub"><b class="last"></b><span>NOTES</span><svg class="eye"><use href="#i-eye"/></svg><svg class="mag"><use href="#i-mag"/></svg><i class="sw red"></i><em>1</em></div>
              <div class="row top"><b class="box plus"></b><span>BACKGROUND</span><svg class="eye"><use href="#i-eye"/></svg><svg class="mag"><use href="#i-mag"/></svg><i class="sw"></i><em>0</em></div>
              <div class="row top"><b></b><span>BENCHMARK</span><svg class="eye"><use href="#i-eye"/></svg><svg class="mag"><use href="#i-mag"/></svg><i class="sw"></i><em>1</em></div>
              <div class="row top"><b class="box plus"></b><span>SPRINKLER S...</span><svg class="eye"><use href="#i-eye"/></svg><svg class="mag"><use href="#i-mag"/></svg><i class="sw"></i><em>0</em></div>
            </div>
          </div>
          <div class="panel-tabs"><span class="on">La...</span><span>D...</span><span>Sy...</span><span>Al...</span><span>Se...</span><span>D...</span><span>Te...</span><span>Pa...</span><span>N...</span><span>Tr...</span><span>Fa...</span></div>
        </aside>

        <section class="document">
          <div class="doc-tabs">
            <span class="tab tab-start">Start Page</span><span class="tab tab-threaded">Simple Threaded System.cad</span>
            <span class="tab on"><span>Simple Grooved System.cad</span><svg viewBox="0 0 8 8"><path stroke="#444" stroke-width="1.300" d="m.5.5 7 7M7.500.5l-7 7"/></svg></span>
            <svg class="tab-arrows" viewBox="0 0 26 12"><path fill="none" stroke="#3e3e3e" d="M5.500 1.500v9l-4-4.500zM19.500 1.500v9l4-4.500z"/></svg>
          </div>
          <div class="doc-frame">
            <div class="view">
              <svg class="canvas" viewBox="330 122 1540 824">
                <path fill="#5a5a5a" d="M330 122h1540v824H330z"/>
                <path fill="#4040ff" d="M666.500 155H1534v758H666.500z"/>
                <path stroke="#5c5ca8" d="M666.500 155v758"/><path stroke="#3535ee" d="M1533.500 155v758"/>
                <path fill="#ff0" stroke="#000" d="M320 121h47.500l-12.500 26.500H320zM406.500 121h55l-13 26.500h-28z"/>
                <text class="hex" x="324" y="127">105</text><text class="hex" x="420" y="127">102</text>
                <path stroke="#2c7a2c" d="M655.500 122v30M675.500 122v23"/>
                <path fill="none" stroke="#852c3e" d="M675 145.500h50.500v-9.500l40 20-40 19.500v-10H666"/>
                <circle cx="666" cy="156" r="9.500" fill="#5a5a5a" stroke="#222"/>
                <path fill="#4040ff" d="M667 156h8a9 9 0 0 0-2-6h-6z" opacity=".5"/>
                <path d="M666 156v-10a10 10 0 0 0-10 10zM666 156v10a10 10 0 0 0 10-10z"/>
                <path stroke="#2e2e80" stroke-width="1.500" d="M645 156h35"/>
                <path fill="#909098" fill-opacity=".85" d="M660 150h12v12h-12zM681 150h12v12h-12z"/>
              </svg>
              <div class="vscroll"><i></i></div>
            </div>
            <div class="hscroll"><i></i></div>
            <div class="sheet-bar">
              <svg viewBox="0 0 62 14"><path fill="#eee" d="M0 0h12v14H0zM16 0h13v14H16zM32 0h13v14H32zM49 0h13v14H49z"/><path fill="#333" d="M9 3v8L5 7zM3 3h1v8H3zM25 3v8l-4-4zM37 3v8l4-4zM53 3v8l4-4zM58 3h1v8h-1z"/></svg>
              <div class="sheets"><span class="on">*Model</span><span>Sheet 1</span></div>
            </div>
          </div>
        </section>
      </div>
      <footer class="status"><span class="help">For Help, press F1</span><span>1 selected</span><span>Elev1: 2'-3</span><span>Text table</span><span># Off</span><span>Foot</span></footer>
    </div>

    <aside class="sidebar">
      <div class="side s1"><i class="dots"></i><span class="vt">Import DWG</span><svg class="ic"><use href="#s-dwg"/></svg><svg class="ic"><use href="#s-docs"/></svg><svg class="ic"><use href="#s-blk"/></svg><i class="scap"></i></div>
      <div class="side s2"><i class="dots"></i><svg class="ic"><use href="#s-ra"/></svg><i class="hsep"></i><svg class="ic"><use href="#s-up"/></svg><i class="hsep"></i><svg class="ic"><use href="#s-wz"/></svg><svg class="ic"><use href="#s-nd"/></svg><i class="scap"></i></div>
      <div class="side s3"><i class="dots"></i><span class="vt">GLSL</span><span class="vt hot">OpenGL®</span><svg class="ic"><use href="#s-m1"/></svg><svg class="ic"><use href="#s-m2"/></svg><svg class="ic"><use href="#i-prop"/></svg><i class="scap"></i></div>
      <div class="side s4"><i class="dots"></i><span class="vt">Hydraulic Calculations...</span><svg class="ic"><use href="#s-chart"/></svg><svg class="ic"><use href="#s-book"/></svg><svg class="ic"><use href="#s-tbl"/></svg><svg class="ic"><use href="#s-las"/></svg><svg class="ic"><use href="#s-nt"/></svg><svg class="ic"><use href="#s-er"/></svg><svg class="ic"><use href="#s-pn"/></svg><svg class="ic"><use href="#s-scr"/></svg><svg class="ic"><use href="#s-hp"/></svg><svg class="ic"><use href="#s-hs"/></svg><svg class="ic"><use href="#s-prt"/></svg><svg class="ic"><use href="#s-gr"/></svg><svg class="ic"><use href="#s-win"/></svg><i class="scap"></i></div>
    </aside>
  </div>

  <div class="toolrow bottom">
    <div class="toolbar tb-panes">
      <i class="grip"></i><span>Reset Panes</span><svg class="ic"><use href="#i-panes"/></svg><span class="btn">Layers</span><span class="btn">Parts Picker</span><span class="btn">Alerts</span><span class="btn">Select</span><span class="btn last-btn">Symbols</span>
      <svg class="ic ab"><use href="#i-left"/></svg><span>-Y</span><svg class="ic ab up"><use href="#i-left"/></svg><span>+X</span><svg class="ic ab right"><use href="#i-left"/></svg><span>+Y</span><svg class="ic ab down"><use href="#i-left"/></svg><span>-X</span><i class="cap"></i>
    </div>
    <div class="toolbar tb-input"><i class="grip"></i><svg class="ic right small"><use href="#i-left"/></svg><i class="field"></i><i class="cap"></i></div>
    <div class="toolbar tb-view">
      <i class="grip"></i><svg class="ic"><use href="#i-u1"/></svg><svg class="ic"><use href="#i-sel"/></svg><svg class="ic"><use href="#i-chk"/></svg><svg class="ic"><use href="#i-burst"/></svg><svg class="ic"><use href="#i-target"/></svg><span>Lock On Target</span>
      <svg class="ic"><use href="#i-zup"/></svg><svg class="ic"><use href="#i-zdn"/></svg><svg class="ic ap up"><use href="#i-left"/></svg><svg class="ic ap"><use href="#i-left"/></svg><svg class="ic ap"><use href="#i-undo"/></svg><svg class="ic ap down"><use href="#i-left"/></svg><svg class="ic ap right"><use href="#i-left"/></svg><svg class="ic ap flip"><use href="#i-undo"/></svg><svg class="ic"><use href="#i-rot"/></svg><svg class="ic flip"><use href="#i-rot"/></svg><svg class="ic"><use href="#i-h1"/></svg><svg class="ic"><use href="#i-h2"/></svg><svg class="ic flip"><use href="#i-h1"/></svg><svg class="ic"><use href="#i-h3"/></svg><svg class="ic"><use href="#i-ext"/></svg><svg class="ic"><use href="#i-iso"/></svg><span class="hot-plan"><svg class="ic"><use href="#i-plan"/></svg></span><i class="cap"></i>
    </div>
  </div>
</div>
</body>
</html>
```
FILE: styles.css
```css
* { box-sizing: border-box; }
body { margin: 0; overflow: hidden; }
.defs { position: absolute; width: 0; height: 0; }
.app {
  display: flex; flex-direction: column; width: 1920px; height: 1032px;
  background: #535353; color: #000;
  font-family: "Open Sans", "Noto Sans", sans-serif; font-size: 11.5px; letter-spacing: -.15px;
  white-space: nowrap; line-height: 16px;
}
.ic { display: block; width: 16px; height: 16px; flex: none; }
.flip { transform: scaleX(-1); }
.up { transform: rotate(90deg); }
.right { transform: rotate(180deg); }
.down { transform: rotate(-90deg); }
.gray { fill: #777; color: #777; }
.tight { letter-spacing: -.22px; }

/* title and menu */
.titlebar { display: flex; align-items: center; height: 23px; background: #faf2e6; padding-left: 2px; }
.app-icon { width: 16px; height: 18px; margin-right: 6px; }
.title { font-size: 12px; letter-spacing: -.3px; }
.win-buttons { width: 110px; height: 20px; margin: 0 15px 2px auto; }
.menubar {
  display: grid; height: 23px; align-items: center; color: #fff; padding-bottom: 1px;
  grid-template-columns: 29px 33px 35px 45px 46px 43px 53px 72px 70px 76px 56px 68px 46px 44px 49px 91px 65px 57px 40px 59px 100px 1fr;
}
.menu-icon { padding-left: 3px; }
.mdi-buttons { width: 42px; height: 12px; justify-self: end; margin: 6px 4px 0 0; }

/* toolbars */
.toolrow { display: flex; gap: 0; height: 24px; flex: none; }
.toolrow-gap { gap: 1px; margin: 1px 0 2px; }
.toolbar {
  display: grid; align-items: center; height: 24px; border-radius: 3px 3px 0 0;
  background: linear-gradient(#ced1d7, #bfc3ca 50%, #9ea4ae);
}
.tb-file { grid-template-columns: 14px 21px 22px 22px 23px 21px 23px 106px 92px 10px; }
.tb-hyd { grid-template-columns: 14px 21px 22px 23px 21px 23px 21px 23px 104px 22px 23px 101px 23px 220px 55px 23px 71px 51px 22px 10px; }
.tb-layers { grid-template-columns: 14px 83px 22px 23px 67px 77px 92px 130px 10px; }
.tb-fit { grid-template-columns: 14px 66px 23px 21px repeat(6, 22px) 23px 98px 86px 24px 44px 68px repeat(7, 22px) 23px 22px 112px 24px 48px 22px 22px 22px 23px 105px 22px 23px 77px 10px; }
.tb-legend { grid-template-columns: 14px 22px 22px 94px 10px; }
.tb-elev { grid-template-columns: 13px 23px 89px 88px 22px 22px 21px 10px; }
.off { color: #898c92; }
.grip { width: 2px; height: 14px; margin-left: 5px; background: repeating-linear-gradient(#333 0 2px, transparent 2px 4px); }
.cap {
  align-self: stretch; border-radius: 0 3px 3px 0;
  background: linear-gradient(#fff, #fff) 4px 16px / 5px 1px no-repeat,
    linear-gradient(135deg, #fff 50%, transparent 50%) 5px 19px / 4px 3px no-repeat,
    linear-gradient(#8b919c, #555b66);
}

/* middle */
.middle { display: flex; height: 910px; }
.main-col { display: flex; flex-direction: column; width: 1895px; }
.workspace { display: flex; height: 892px; gap: 5px; }

.panel { width: 319px; display: flex; flex-direction: column; background: #535353; }
.panel-title { display: flex; justify-content: space-between; align-items: center; height: 19px; background: #9c9e9c; color: #3c3c3c; padding: 0 3px 1px 4px; }
.panel-title svg { width: 26px; height: 12px; }
.panel-body { height: 848px; background: #fff; border: solid #e4e4e4; border-width: 2px 3px 1px; }
.panel-tools { display: flex; align-items: center; height: 24px; padding: 0 5px; gap: 6px; background: linear-gradient(#ced1d7, #bfc3ca 50%, #9ea4ae); }
.vsep { width: 2px; height: 12px; background: #6a6e76; border-right: 1px solid #ddd; }
.panel-tools .vsep { margin: 0 .6px; }
.list-head { display: grid; grid-template-columns: 100px 20px 20px 20px 20px 75px 1fr; height: 19px; background: linear-gradient(#ececec, #e2e2e2); border-bottom: 1px solid #aaa; letter-spacing: .1px; }
.list-head span { border-right: 1px solid #aaa; padding-left: 5px; line-height: 19px; }
.list-head span:last-child { border: 0; }
.row { display: grid; grid-template-columns: 17px 83px 20px 40px 20px 75px; height: 17px; align-items: center; line-height: 15px; }
.row.sub { grid-template-columns: 32px 68px 20px 40px 20px 75px; }
.row em { font-style: normal; padding-left: 3px; }
.row span { overflow: hidden; }
.row.sub span { letter-spacing: -.3px; }
.row.picked { background: linear-gradient(#0078d7, #0078d7) 30px 0 / 225px 17px no-repeat; color: #fff; }
.picked .eye, .picked .mag { opacity: .6; }
.eye { width: 16px; height: 12px; margin-bottom: 2px; }
.mag { width: 14px; height: 15px; margin-left: 1px; }
.sw { width: 18px; height: 14px; background: #000; border: 1px solid #bbb; border-right-color: #666; border-bottom-color: #666; }
.sw.blue { background: #00f; }
.sw.red { background: #f00; }
.row b {
  height: 17px;
  background: repeating-linear-gradient(90deg, #999 0 1px, #fff 1px 2px) 7px 8px / 8px 1px no-repeat, repeating-linear-gradient(#999 0 1px, #fff 1px 2px) 7px 0 / 1px 17px no-repeat;
}
.row b.first { background-size: 8px 1px, 1px 9px; background-position: 7px 8px, 7px 8px; }
.row.sub b {
  background: repeating-linear-gradient(90deg, #999 0 1px, #fff 1px 2px) 22px 8px / 8px 1px no-repeat,
    repeating-linear-gradient(#999 0 1px, #fff 1px 2px) 22px 0 / 1px 17px no-repeat,
    repeating-linear-gradient(#999 0 1px, #fff 1px 2px) 7px 0 / 1px 17px no-repeat;
}
.row.sub b.last { background-size: 8px 1px, 1px 9px, 1px 17px; }
.row b.box {
  background: linear-gradient(#000, #000) 5px 8px / 5px 1px no-repeat, linear-gradient(#fff, #fff) 4px 5px / 7px 7px no-repeat,
    linear-gradient(#888, #888) 3px 4px / 9px 9px no-repeat;
}
.row b.plus { background: linear-gradient(#000, #000) 7px 6px / 1px 5px no-repeat, linear-gradient(#000, #000) 5px 8px / 5px 1px no-repeat, linear-gradient(#fff, #fff) 4px 5px / 7px 7px no-repeat, linear-gradient(#888, #888) 3px 4px / 9px 9px no-repeat; }
.panel-tabs { display: grid; grid-template-columns: 30px 26px 27px 27px 27px 27px 27px 27px 27px 27px 27px; padding-left: 4px; color: #fff; height: 25px; line-height: 23px; letter-spacing: -.3px; }
.panel-tabs span { padding-left: 2px; }
.panel-tabs .on { width: 23px; height: 20px; padding-left: 3px; color: #000; background: linear-gradient(#fff, #dcebee); border-radius: 0 0 5px 5px; }

/* document */
.document { width: 1571px; display: flex; flex-direction: column; border-top: 1px solid #aaa; }
.doc-tabs { display: flex; height: 18px; color: #fff; align-items: stretch; padding-left: 7px; line-height: 18px; letter-spacing: -.2px; }
.tab-start { width: 66px; }
.tab-threaded { width: 155px; letter-spacing: -.36px; }
.tab.on { display: flex; align-items: center; justify-content: space-between; width: 172px; margin-top: 1px; padding: 0 5px 0 6px; color: #000; font-weight: 700; letter-spacing: -.56px; background: linear-gradient(#fff, #e9eef0); border-radius: 4px 4px 0 0; }
.tab.on svg { width: 8px; height: 8px; margin-top: 2px; }
.tab-arrows { width: 26px; height: 12px; margin: 3px 8px 0 auto; }
.doc-frame { display: flex; flex-direction: column; height: 872px; width: 1570px; border: 3px solid #f2f2f2; border-bottom-width: 7px; border-right-width: 6px; padding: 3px 0 0 3px; background: linear-gradient(#777, #444 60%) 0 0 / 100% 3px no-repeat, #aaa; }
.view { display: flex; height: 824px; }
.canvas { width: 1540px; height: 824px; }
.hex { font: 700 20px "Liberation Sans", sans-serif; letter-spacing: 0; }
.vscroll { width: 18px; background: #f0f0f0; padding: 566px 0 0 8px; }
.vscroll i { display: block; width: 2px; height: 17px; background: #888; }
.hscroll { height: 17px; background: #f0f0f0; padding: 8px 0 0 1061px; }
.hscroll i { display: block; width: 17px; height: 2px; background: #888; }
.sheet-bar { display: flex; height: 18px; background: linear-gradient(#4a4a4a, #6f6f6f 30%, #7c7c7c); padding-top: 1px; }
.sheet-bar > svg { width: 62px; height: 14px; margin-top: 1px; }
.sheets { display: flex; height: 17px; padding-left: 5px; letter-spacing: -.3px; line-height: 17px; }
.sheets span { background: linear-gradient(#d8dbe0, #b4bac4); clip-path: polygon(10px 0, 100% 0, calc(100% - 14px) 100%, 0 100%); width: 62px; margin-left: -14px; padding-left: 14px; }
.sheets span.on { width: 59px; margin-left: 0; padding-left: 7px; background: #fff; font-weight: 700; letter-spacing: -.55px; clip-path: polygon(0 0, 100% 0, calc(100% - 12px) 100%, 6px 100%); }

.status { display: grid; grid-template-columns: 1648px 62px 63px 56px 33px 33px; height: 18px; color: #fff; background: linear-gradient(#4a4e59, #373c47 7px, #2f2f2f 7px); line-height: 20px; letter-spacing: -.25px; }
.status span { border-left: 1px solid #666; padding-left: 5px; }
.status .help { border: 0; padding-left: 4px; letter-spacing: -.2px; }

/* sidebar */
.sidebar { width: 25px; display: flex; flex-direction: column; }
.side { display: flex; flex-direction: column; align-items: center; background: linear-gradient(90deg, #ced1d7, #bfc3ca 50%, #9ea4ae); padding: 3px 1px 0 0; }
.s1 { height: 160px; } .s2 { height: 123px; } .s3 { height: 191px; } .s4 { height: 436px; }
.dots { width: 14px; height: 2px; background: repeating-linear-gradient(90deg, #333 0 2px, transparent 2px 4px); flex: none; }
.vt { writing-mode: vertical-rl; line-height: 19px; font-size: 12px; letter-spacing: -.1px; flex: none; }
.s1 .vt { height: 71px; margin-top: 11px; }
.s1 .ic { margin-bottom: 5px; }
.s2 .ic { margin: 8px 0 4px; }
.s2 .ic + .ic { margin-top: 7px; }
.s2 .hsep + .ic { margin: 5px 0 4px; }
.hsep { width: 14px; height: 1px; background: #666; flex: none; }
.s3 .vt { height: 34px; margin-top: 11px; }
.s3 .vt.hot { height: 63px; margin: -1px 0 3px; padding-top: 4px; width: 21px; letter-spacing: -.4px; border: 1px solid #999; background: linear-gradient(#f6cf9f, #ffad4c 45%, #ffe375); }
.s3 .ic { margin-bottom: 5px; }
.s4 .vt { height: 138px; margin-top: 9px; letter-spacing: .08px; }
.s4 .ic { margin-bottom: 5px; }
.scap { width: 25px; height: 13px; flex: none; margin: auto -1px 0 0; background: linear-gradient(#fff, #fff) 16px 4px / 1px 6px no-repeat, linear-gradient(45deg, #fff 50%, transparent 50%) 18px 4px / 4px 5px no-repeat, linear-gradient(90deg, #555b66, #a0a6b0); }

/* bottom */
.bottom { height: 25px; gap: 1px; padding-bottom: 1px; }
.tb-panes { grid-template-columns: 14px 69px 19px 40px 67px 39px 39px 53px 20px 16px 21px 21px 21px 21px 20px 17px 10px; }
.tb-input { grid-template-columns: 12px 23px 65px 10px; }
.tb-view { grid-template-columns: 12px 23px 22px 22px 22px 23px 86px repeat(10, 22px) 23px 22px 22px 21px 21px 21px 24px 10px; }
.btn { height: 22px; text-align: center; border: 1px solid #b9a78a; background: linear-gradient(#ffd9a8, #ffb765 45%, #ffe68c); line-height: 20px; letter-spacing: -.3px; }
.last-btn { width: 50px; }
.ab { fill: #00f; }
.ap { fill: #8c008c; color: #8c008c; }
.small { width: 13px; height: 13px; }
.field { width: 60px; height: 16px; background: #fff; }
.hot-plan { display: grid; place-items: center; width: 21px; height: 22px; border: 1px solid #b9a78a; background: linear-gradient(#ffd9a8, #ffe68c); }
```
